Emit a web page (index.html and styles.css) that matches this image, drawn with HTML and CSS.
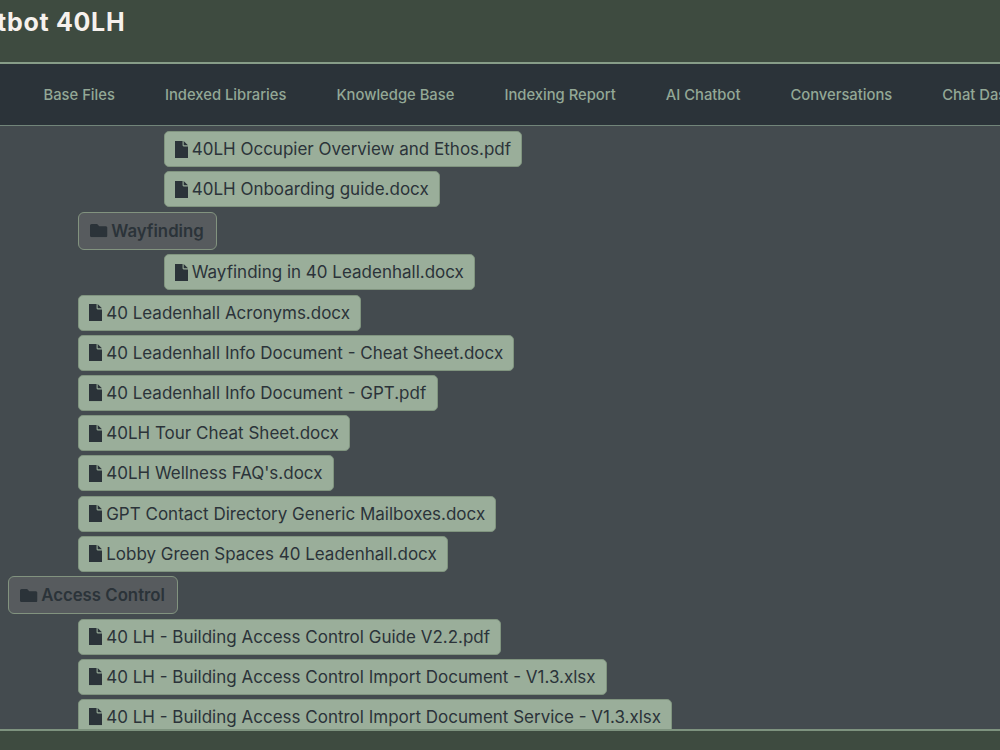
FILE: index.html
```
<!DOCTYPE html>
<html lang="en">
<head>
<meta charset="utf-8">
<title>Chatbot 40LH</title>
<link rel="stylesheet" href="styles.css">
</head>
<body>
<svg class="defs" width="0" height="0" aria-hidden="true">
  <symbol id="file" viewBox="0 0 384 512"><path d="M0 0H224V128C224 146 238 160 256 160H384V512H0ZM256 0L384 128H256Z"/></symbol>
  <symbol id="folder" viewBox="0 0 512 384"><path d="M464 64H272L208 0H48C21 0 0 21 0 48V336c0 27 21 48 48 48H464c27 0 48-21 48-48V112c0-27-21-48-48-48z"/></symbol>
</svg>
<div class="app">
  <header class="header"><h1 class="title">tbot 40LH</h1></header>
  <nav class="nav">
    <a>Base Files</a><a>Indexed Libraries</a><a>Knowledge Base</a><a>Indexing Report</a><a>AI Chatbot</a><a>Conversations</a><a>Chat Dashboard</a>
  </nav>
  <main class="tree">
    <div class="row deep"><span class="file"><svg><use href="#file"/></svg>40LH Occupier Overview and Ethos.pdf</span></div>
    <div class="row deep"><span class="file"><svg><use href="#file"/></svg>40LH Onboarding guide.docx</span></div>
    <div class="row mid dir"><span class="folder"><svg><use href="#folder"/></svg>Wayfinding</span></div>
    <div class="row deep"><span class="file"><svg><use href="#file"/></svg>Wayfinding in 40 Leadenhall.docx</span></div>
    <div class="row mid"><span class="file"><svg><use href="#file"/></svg>40 Leadenhall Acronyms.docx</span></div>
    <div class="row mid"><span class="file"><svg><use href="#file"/></svg>40 Leadenhall Info Document - Cheat Sheet.docx</span></div>
    <div class="row mid"><span class="file"><svg><use href="#file"/></svg>40 Leadenhall Info Document - GPT.pdf</span></div>
    <div class="row mid"><span class="file"><svg><use href="#file"/></svg>40LH Tour Cheat Sheet.docx</span></div>
    <div class="row mid"><span class="file"><svg><use href="#file"/></svg>40LH Wellness FAQ's.docx</span></div>
    <div class="row mid"><span class="file"><svg><use href="#file"/></svg>GPT Contact Directory Generic Mailboxes.docx</span></div>
    <div class="row mid"><span class="file"><svg><use href="#file"/></svg>Lobby Green Spaces 40 Leadenhall.docx</span></div>
    <div class="row dir"><span class="folder"><svg><use href="#folder"/></svg>Access Control</span></div>
    <div class="row mid"><span class="file"><svg><use href="#file"/></svg>40 LH - Building Access Control Guide V2.2.pdf</span></div>
    <div class="row mid"><span class="file"><svg><use href="#file"/></svg>40 LH - Building Access Control Import Document - V1.3.xlsx</span></div>
    <div class="row mid"><span class="file"><svg><use href="#file"/></svg>40 LH - Building Access Control Import Document Service - V1.3.xlsx</span></div>
  </main>
  <footer class="footer"></footer>
</div>
</body>
</html>
```
FILE: styles.css
```
* { box-sizing: border-box; }
body { margin: 0; font-family: Inter, "Liberation Sans", sans-serif; background: #3e4b40; }
.defs { display: block; width: 0; height: 0; }
.app { height: 750px; display: flex; flex-direction: column; overflow: hidden; }
.header { flex: 0 0 64px; border-bottom: 2px solid #879d88; background: #3e4b40; }
.title { margin: 0; padding-top: 6px; margin-left: -3px; font-size: 25px; line-height: 32px; font-weight: 650; letter-spacing: .7px; color: #f6f1ed; white-space: nowrap; }
.nav { flex: 0 0 62px; display: flex; align-items: center; gap: 50px; padding-left: 43.5px; background: #2b3339; border-bottom: 1px solid #72857a; overflow: hidden; }
.nav a { flex: none; font-size: 14.78px; line-height: 20px; font-weight: 500; color: #93a896; white-space: nowrap; }
.tree { flex: 1; min-height: 0; overflow: hidden; background: #444b4f; padding: 5.3px 0 0 8px; }
.row { height: 40.2px; display: flex; align-items: flex-start; }
.dir { height: 42.8px; }
.mid { padding-left: 70px; }
.deep { padding-left: 155.5px; }
.file, .folder { display: flex; align-items: center; height: 36px; padding: 0 10.3px 0 10px; border: 1px solid #80947f; border-radius: 5px; background: #9aae9a; color: #2b3339; font-size: 17px; white-space: nowrap; }
.folder { height: 38.5px; padding: 0 11.8px 0 11px; border-color: #82937f; border-radius: 6px; background: #575b5e; font-size: 16.8px; font-weight: 600; }
.file svg { width: 13px; height: 17.3px; margin-right: 4.2px; fill: #2b3339; }
.folder svg { width: 17.5px; height: 13.2px; margin-right: 3.7px; fill: #2b3339; }
.footer { flex: 0 0 21px; border-top: 2px solid #7e937f; background: #3e4b40; }
```
